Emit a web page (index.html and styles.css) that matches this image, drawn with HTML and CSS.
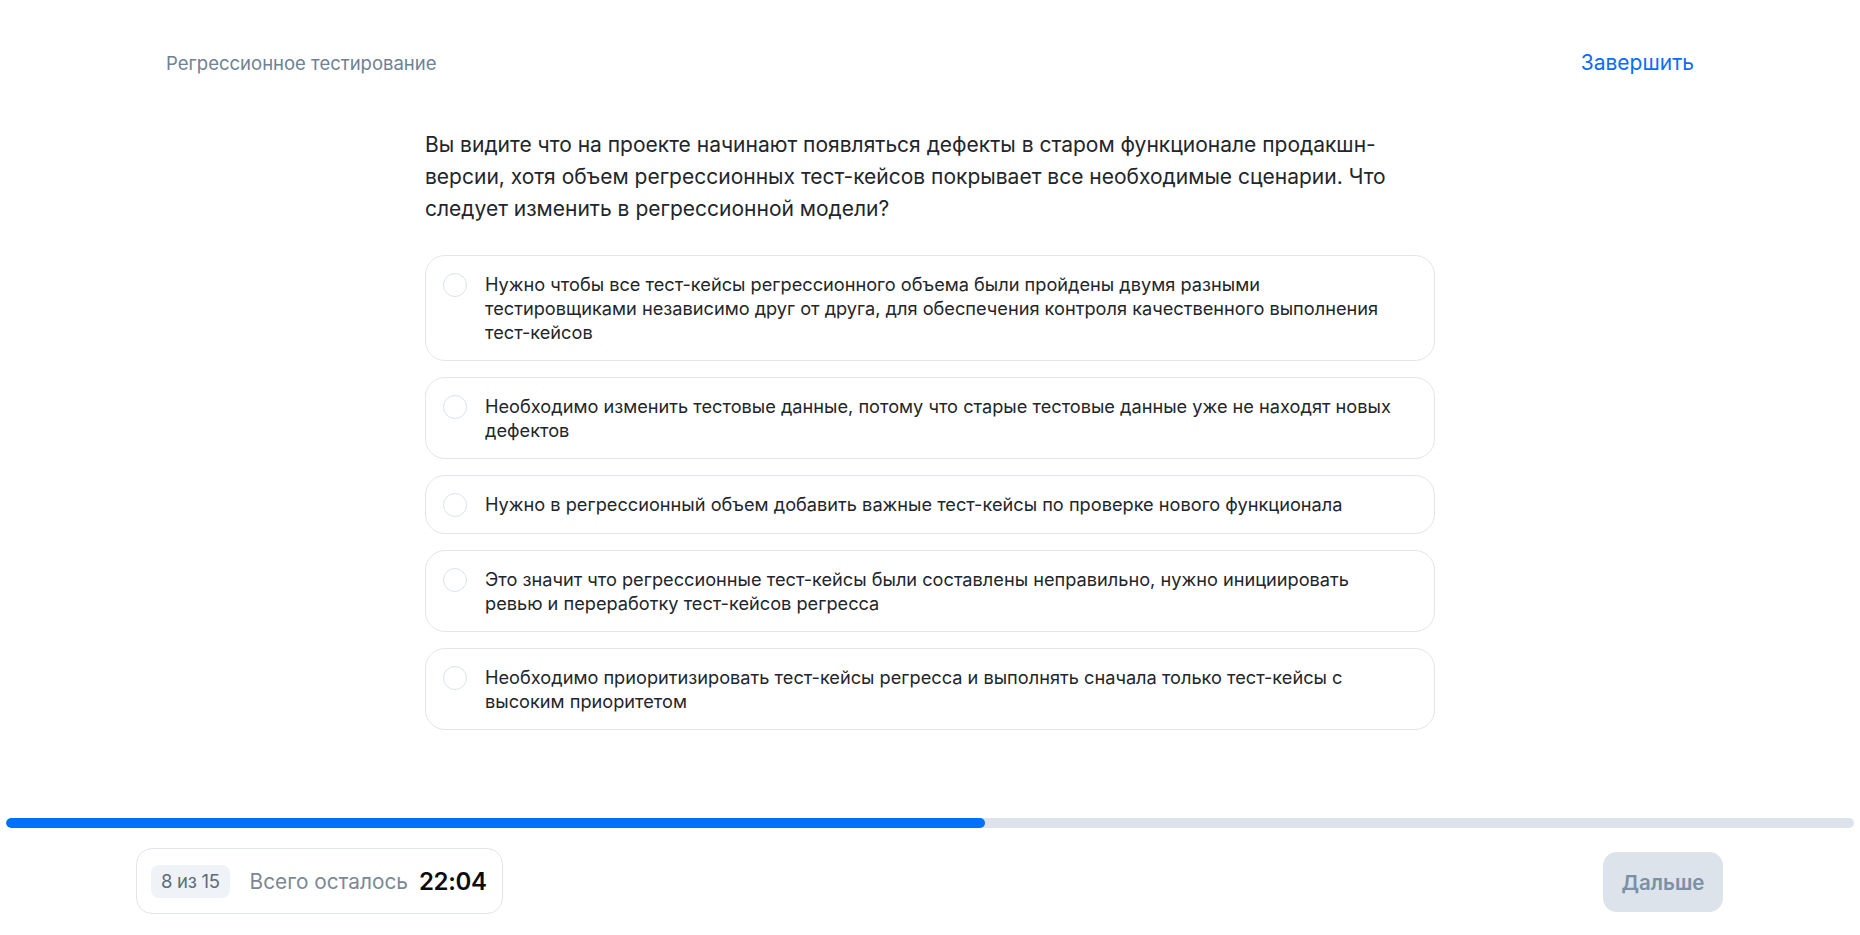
FILE: index.html
```html
<!DOCTYPE html>
<html lang="ru">
<head>
<meta charset="utf-8">
<title>Регрессионное тестирование</title>
<link rel="stylesheet" href="styles.css">
</head>
<body>
<div class="page">
  <header class="top">
    <div class="topic">Регрессионное тестирование</div>
    <a class="finish" href="#">Завершить</a>
  </header>
  <main class="quiz">
    <p class="question">Вы видите что на проекте начинают появляться дефекты в старом функционале продакшн-версии, хотя объем регрессионных тест-кейсов покрывает все необходимые сценарии. Что следует изменить в регрессионной модели?</p>
    <div class="options">
      <label class="option"><span class="radio"></span><span class="otext">Нужно чтобы все тест-кейсы регрессионного объема были пройдены двумя разными тестировщиками независимо друг от друга, для обеспечения контроля качественного выполнения тест-кейсов</span></label>
      <label class="option"><span class="radio"></span><span class="otext">Необходимо изменить тестовые данные, потому что старые тестовые данные уже не находят новых дефектов</span></label>
      <label class="option"><span class="radio"></span><span class="otext">Нужно в регрессионный объем добавить важные тест-кейсы по проверке нового функционала</span></label>
      <label class="option"><span class="radio"></span><span class="otext">Это значит что регрессионные тест-кейсы были составлены неправильно, нужно инициировать ревью и переработку тест-кейсов регресса</span></label>
      <label class="option"><span class="radio"></span><span class="otext">Необходимо приоритизировать тест-кейсы регресса и выполнять сначала только тест-кейсы с высоким приоритетом</span></label>
    </div>
  </main>
  <div class="progress"><div class="progress-fill" style="width: 53%"></div></div>
  <footer class="bottom">
    <div class="status">
      <span class="badge">8 из 15</span>
      <span class="left-label">Всего осталось</span>
      <span class="timer">22:04</span>
    </div>
    <button class="next" type="button">Дальше</button>
  </footer>
</div>
</body>
</html>
```
FILE: styles.css
```css
* { box-sizing: border-box; }
html, body { margin: 0; padding: 0; background: #fff; }
body {
  font-family: Inter, "Noto Sans", "DejaVu Sans", sans-serif;
  color: #1f2329;
}
.page {
  width: 1860px;
  height: 935px;
  overflow: hidden;
  display: flex;
  flex-direction: column;
}
.top {
  display: flex;
  justify-content: space-between;
  align-items: center;
  padding: 48px 166px 0;
  height: 77px;
  flex: none;
}
.topic {
  font-size: 18.5px;
  line-height: 28px;
  color: #6f8194;
}
.finish {
  font-size: 21px;
  line-height: 28px;
  color: #0a6cff;
  text-decoration: none;
}
.quiz {
  flex: 1;
  width: 1010px;
  margin: 52px auto 0;
}
.question {
  margin: 0;
  font-size: 21px;
  line-height: 32px;
  color: #22262b;
}
.options {
  display: flex;
  flex-direction: column;
  gap: 16px;
  margin-top: 30px;
}
.option {
  display: flex;
  align-items: flex-start;
  gap: 18px;
  border: 1px solid #e1e6ec;
  border-radius: 20px;
  padding: 16px 34px 16px 17px;
  cursor: pointer;
}
.radio {
  flex: none;
  width: 24px;
  height: 24px;
  border: 1.5px solid #dce3eb;
  border-radius: 50%;
  margin-top: 1px;
}
.otext {
  font-size: 18.2px;
  line-height: 24px;
  color: #22262b;
}
.progress {
  flex: none;
  margin: 0 6px;
  height: 10px;
  border-radius: 5px;
  background: #dde3ea;
  overflow: hidden;
}
.progress-fill {
  height: 100%;
  background: #0070ff;
  border-radius: 5px;
}
.bottom {
  flex: none;
  display: flex;
  justify-content: space-between;
  align-items: center;
  padding: 20px 137px 21px 136px;
}
.status {
  display: flex;
  align-items: center;
  height: 66px;
  border: 1px solid #e1e6ec;
  border-radius: 16px;
  padding: 0 15px 0 14px;
}
.badge {
  background: #eff3f7;
  border-radius: 8px;
  padding: 0 10px;
  height: 33px;
  line-height: 33px;
  font-size: 18.5px;
  color: #5d6b7a;
  letter-spacing: -0.3px;
}
.left-label {
  margin-left: 20px;
  font-size: 20.8px;
  color: #7a8898;
}
.timer {
  margin-left: 11px;
  font-size: 24px;
  font-weight: 600;
  color: #0b0d10;
  letter-spacing: -0.3px;
}
.next {
  width: 120px;
  height: 60px;
  border: none;
  border-radius: 14px;
  background: #dce3eb;
  color: #7b90a5;
  font-family: inherit;
  font-size: 20.5px;
  font-weight: 600;
  margin-top: 2px;
}
```
